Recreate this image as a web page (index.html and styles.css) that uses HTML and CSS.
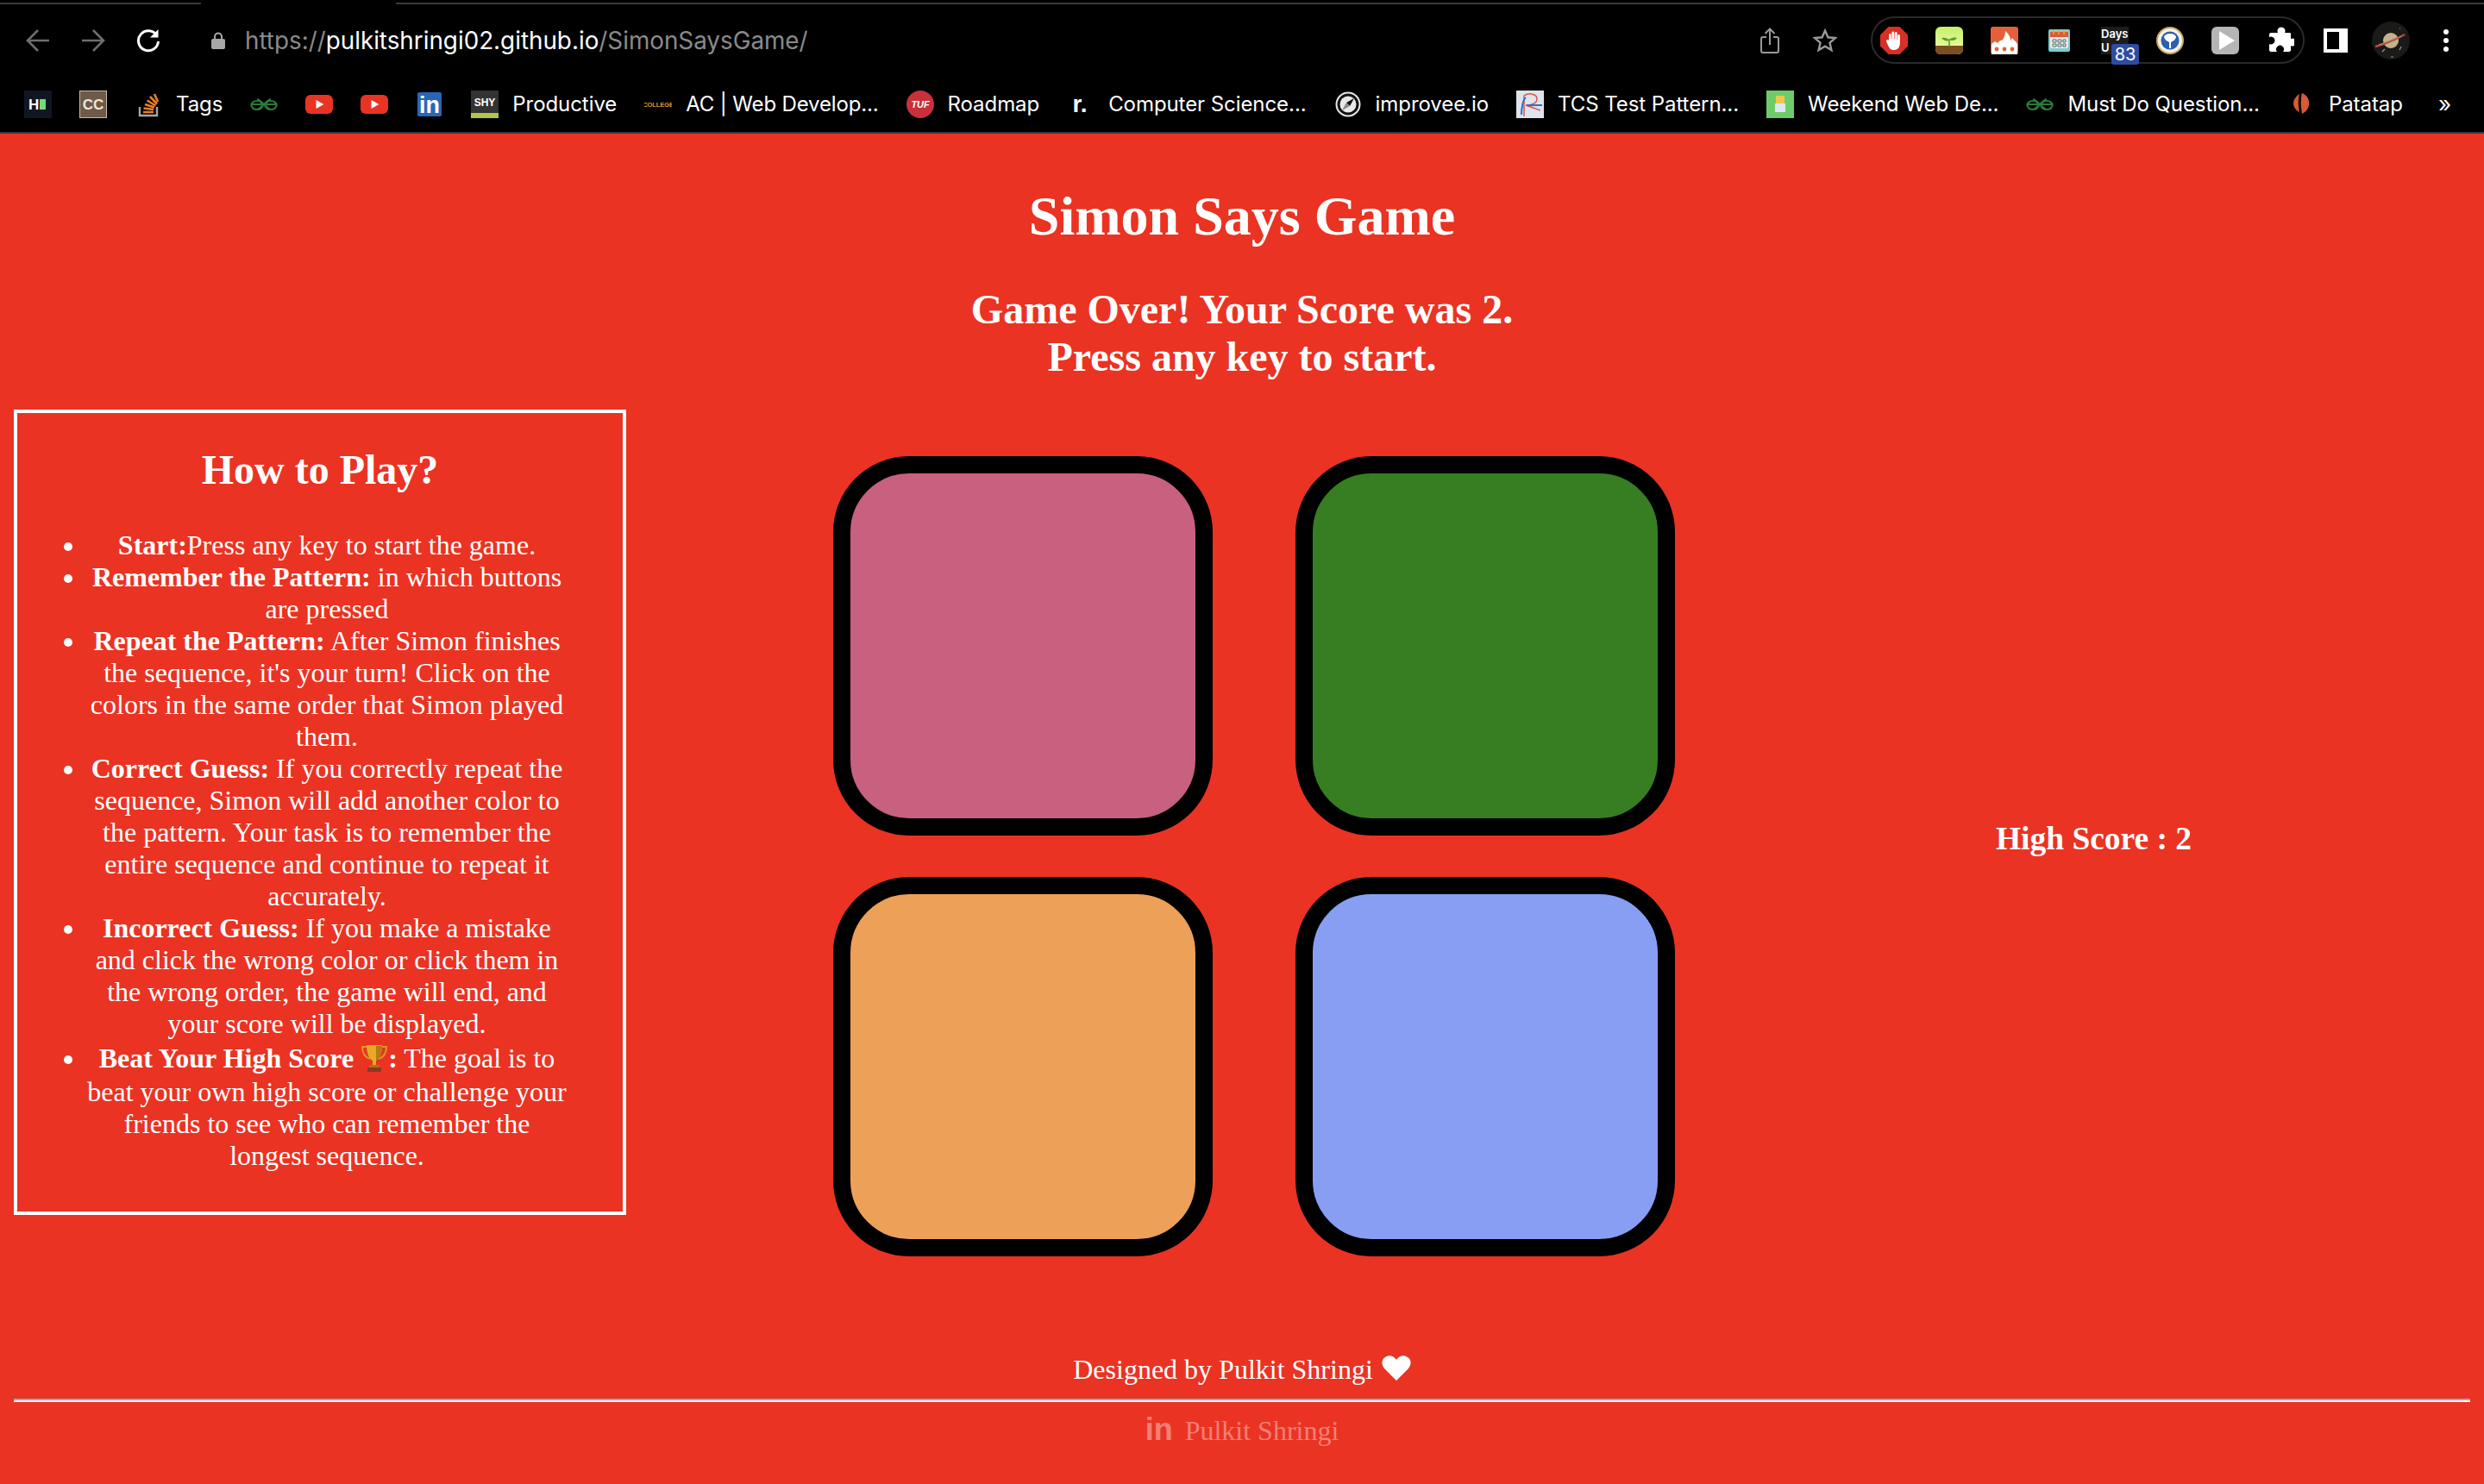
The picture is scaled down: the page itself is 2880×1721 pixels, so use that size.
FILE: index.html
```html
<!DOCTYPE html>
<html lang="en">
<head>
    <meta charset="UTF-8">
    <meta name="viewport" content="width=device-width, initial-scale=1.0">
    <title>Simon Says Game</title>
    <link rel="stylesheet" href="styles.css">
</head>
<body>
    <div class="browser">
        <div class="tab-line">
            <div class="tab-line-left"></div>
            <div class="tab-line-right"></div>
        </div>
        <div class="toolbar">
            <svg class="nav-icon" viewBox="0 0 28 28" fill="none" stroke="#6e6e6e" stroke-width="2.6"><path d="M27 14H3M14 2 2 14l12 12"/></svg>
            <svg class="nav-icon" viewBox="0 0 28 28" fill="none" stroke="#6e6e6e" stroke-width="2.6"><path d="M1 14h24M14 2l12 12-12 12"/></svg>
            <svg class="nav-icon" viewBox="0 0 28 28" fill="none" stroke="#fff" stroke-width="3"><path d="M24 8.500A11.500 11.500 0 1 0 25.500 15"/><path d="M25.500 1v9.500H16" fill="#fff" stroke="none"/></svg>
            <svg class="lock" viewBox="0 0 16 20"><path d="M4 9V5.500a4 4 0 0 1 8 0V9" fill="none" stroke="#a8a8a8" stroke-width="2"/><rect y="8" width="16" height="12" rx="2" fill="#a8a8a8"/></svg>
            <div class="url">https://<span class="url-host">pulkitshringi02.github.io</span>/SimonSaysGame/</div>
            <div class="toolbar-right">
                <svg class="share" viewBox="0 0 22 30" fill="none" stroke="#9a9a9a" stroke-width="2"><path d="M7 11H3a2 2 0 0 0-2 2v14a2 2 0 0 0 2 2h16a2 2 0 0 0 2-2V13a2 2 0 0 0-2-2h-4M11 20V2M5.500 7 11 1.500 16.500 7"/></svg>
                <svg class="star" viewBox="0 0 28 28" fill="none" stroke="#9a9a9a" stroke-width="2.400"><path d="M14 2.500l3.400 7.800 8.400.8-6.300 5.600 1.900 8.300-7.400-4.400-7.400 4.400 1.900-8.300-6.300-5.600 8.400-.8z"/></svg>
                <div class="ext-pill">
                    <svg class="fav" viewBox="0 0 32 32"><path d="M9.500 0h13L32 9.500v13L22.500 32h-13L0 22.500v-13z" fill="#d92f26"/><path d="M10 15V9.500a1.400 1.400 0 0 1 2.800 0V14h.6V6.800a1.400 1.400 0 0 1 2.800 0V14h.6V7.500a1.400 1.400 0 0 1 2.800 0V15h.5v-4.500a1.400 1.400 0 0 1 2.800 0V19c0 5-3 8-7 8-3.500 0-5-1.500-6.500-4.500L7 17a1.400 1.400 0 0 1 2.400-1.400z" fill="#fff"/></svg>
                    <svg class="fav" viewBox="0 0 32 32"><defs><linearGradient id="forest-sky" x1="0" y1="0" x2="0" y2="1"><stop offset="0" stop-color="#c5f06a"/><stop offset="1" stop-color="#f0fcae"/></linearGradient></defs><rect width="32" height="32" rx="6" fill="url(#forest-sky)"/><path d="M0 22h32v4a6 6 0 0 1-6 6H6a6 6 0 0 1-6-6z" fill="#7c4f21"/><path d="M16 23v-9" stroke="#5d9a2c" stroke-width="1.600"/><path d="M16 16c-2-3-5-4-9-3 2 3 6 4 9 3zM16 15c2-2 5-3 9-2-2 3-6 4-9 2z" fill="#5d9a2c"/></svg>
                    <svg class="fav" viewBox="0 0 32 32"><rect width="32" height="32" rx="3" fill="#e5603a"/><path d="M1 32V20l4-3 3 2c2-3 4-3 6-4 2-3 3-6 3-10 4 3 6 7 6 11l2-3c2 3 6 5 6 8v11z" fill="#fff"/><circle cx="7" cy="26" r="2.400" fill="#e5603a"/><circle cx="16" cy="26" r="2.400" fill="#e5603a"/><circle cx="25" cy="26" r="2.400" fill="#e5603a"/></svg>
                    <svg class="fav" viewBox="0 0 32 32"><rect x="3" y="3" width="25" height="26" rx="2" fill="#7ccdd0"/><rect x="5" y="6" width="21" height="19" rx="2" fill="#e4ecec"/><rect x="5" y="6" width="21" height="6" fill="#e2573a"/><path d="M9 4v5M15 4v5M21 4v5" stroke="#e0a92e" stroke-width="1.600"/><path d="M8 15h4v3H8zM14 15h4v3h-4zM20 15h3v3h-3zM8 20h4v3H8zM14 20h4v3h-4zM20 20h3v3h-3z" fill="none" stroke="#5a6a6a"/></svg>
                    <div class="days-ext">
                        <div class="days-text">Days<br>U</div>
                        <div class="days-badge">83</div>
                    </div>
                    <svg class="fav" viewBox="0 0 32 32"><circle cx="16" cy="16" r="15" fill="#f2f2e8" stroke="#c9a860" stroke-width="2"/><circle cx="16" cy="16" r="10.500" fill="#2a5fae"/><path d="M15 25v-7l-5-3 1-1 4 2v-5h2v5l4-2 1 1-5 3v7z" fill="#fff"/><ellipse cx="16" cy="12" rx="7" ry="4" fill="#fff"/></svg>
                    <svg class="fav" viewBox="0 0 32 32"><rect width="32" height="32" rx="6" fill="#b5b5b5"/><path d="M9 5l18 11L9 27z" fill="#fff"/></svg>
                    <svg class="fav" viewBox="0 0 32 32"><path d="M13 7a4.500 4.500 0 1 1 8 0h6a1 1 0 0 1 1 1v6a4.500 4.500 0 1 1 0 8v5a2 2 0 0 1-2 2h-7a4.500 4.500 0 1 0-7 0H5a2 2 0 0 1-2-2v-7a4.500 4.500 0 1 0 0-8V9a2 2 0 0 1 2-2z" fill="#fff"/></svg>
                </div>
                <div class="side-panel"></div>
                <svg class="avatar" viewBox="0 0 44 44"><circle cx="22" cy="22" r="22" fill="#1a1a18"/><circle cx="22" cy="22" r="9" fill="#c8b08c"/><path d="M4 29C12 27 30 20 38 15" stroke="#c9403c" stroke-width="2.400" fill="none"/><path d="M8 27C16 24 28 20 34 17" stroke="#7fae78" stroke-width="1"/><path d="M12 35l3-3M32 33l2-4M22 41h3M32 8h1" stroke="#999" stroke-width="1.200"/></svg>
                <div class="dots"><i></i><i></i><i></i></div>
            </div>
        </div>
        <div class="bookmarks">
            <div class="bm">
                <svg class="fav" viewBox="0 0 32 32"><rect width="32" height="32" fill="#111722"/><text x="5" y="22" class="fav-text" font-size="17" fill="#fff">H</text><rect x="18" y="10" width="7" height="12" fill="#6fdc7e"/></svg>
            </div>
            <div class="bm">
                <svg class="fav" viewBox="0 0 32 32"><rect width="32" height="32" fill="#c4b9aa"/><rect x="1" y="1" width="30" height="30" fill="#6f5a47"/><text x="16" y="22" text-anchor="middle" class="fav-text" font-size="17" fill="#eee6da">CC</text></svg>
            </div>
            <div class="bm">
                <svg class="fav" viewBox="0 0 32 32"><path d="M6 19v10h20V19" fill="none" stroke="#a5a5a5" stroke-width="2.400"/><path d="M10 25h12M10.500 20.500l11.500 1.500M12 16l11 3.500M14.500 11.500l10 6M18 7l8 8.500M23 4l4 9" stroke="#e87e28" stroke-width="2.600"/></svg>
                <span>Tags</span>
            </div>
            <div class="bm">
                <svg class="fav" viewBox="0 0 32 32" fill="none" stroke="#2a7a3c" stroke-width="2.200"><ellipse cx="8" cy="17" rx="6.500" ry="5"/><ellipse cx="24" cy="17" rx="6.500" ry="5"/><path d="M2 16h28M8 10c4 0 12 12 16 12M24 10c-4 0-12 12-16 12"/></svg>
            </div>
            <div class="bm">
                <svg class="fav" viewBox="0 0 32 32"><rect y="5" width="32" height="22" rx="6" fill="#e93323"/><path d="M12.500 11l9 5-9 5z" fill="#fff"/></svg>
            </div>
            <div class="bm">
                <svg class="fav" viewBox="0 0 32 32"><rect y="5" width="32" height="22" rx="6" fill="#e93323"/><path d="M12.500 11l9 5-9 5z" fill="#fff"/></svg>
            </div>
            <div class="bm">
                <svg class="fav" viewBox="0 0 32 32"><rect x="2" y="2" width="28" height="28" rx="2" fill="#2867b8"/><text x="16" y="26" text-anchor="middle" class="fav-text" font-size="27" fill="#fff">in</text></svg>
            </div>
            <div class="bm">
                <svg class="fav" viewBox="0 0 32 32"><rect width="32" height="32" fill="#333"/><rect y="26" width="32" height="6" fill="#b3c640"/><text x="16" y="18" text-anchor="middle" class="fav-text" font-size="12" fill="#fff">SHY</text></svg>
                <span>Productive</span>
            </div>
            <div class="bm">
                <svg class="fav" viewBox="0 0 32 32"><text x="16" y="19" text-anchor="middle" class="fav-text" font-size="7.500" fill="#e0982a">COLLEGE</text></svg>
                <span class="bm-tight">AC | Web Develop...</span>
            </div>
            <div class="bm">
                <svg class="fav" viewBox="0 0 32 32"><circle cx="16" cy="16" r="16" fill="#c8303c"/><text x="16" y="20" text-anchor="middle" class="fav-text" font-size="11" font-style="italic" fill="#fff">TUF</text></svg>
                <span>Roadmap</span>
            </div>
            <div class="bm">
                <svg class="fav" viewBox="0 0 32 32"><text x="15" y="25" text-anchor="middle" class="fav-text" font-size="28" fill="#fff">r.</text></svg>
                <span>Computer Science...</span>
            </div>
            <div class="bm">
                <svg class="fav" viewBox="0 0 32 32"><circle cx="16" cy="16" r="13.500" fill="#111" stroke="#e8e8e8" stroke-width="2"/><circle cx="16" cy="16" r="9.500" fill="#e8e8e8"/><path d="M23 9l-5 9-4-4z" fill="#111"/><path d="M9 23l5-9 4 4z" fill="#888"/></svg>
                <span>improvee.io</span>
            </div>
            <div class="bm">
                <svg class="fav" viewBox="0 0 32 32"><rect width="32" height="32" fill="#dfe3ea"/><path d="M9 30V6c6-4 15-2 15 4 0 5-7 7-13 7l17 6" fill="none" stroke="#d8584e" stroke-width="1.500"/><path d="M6 28c0-8 2-18 5-20M12 17h18" fill="none" stroke="#2e6fd0" stroke-width="2"/></svg>
                <span>TCS Test Pattern...</span>
            </div>
            <div class="bm">
                <svg class="fav" viewBox="0 0 32 32"><rect width="32" height="32" fill="#6ecb6a"/><rect x="11" y="6" width="10" height="9" fill="#f0c850"/><rect x="10" y="15" width="12" height="10" fill="#dfe8f0"/></svg>
                <span>Weekend Web De...</span>
            </div>
            <div class="bm">
                <svg class="fav" viewBox="0 0 32 32" fill="none" stroke="#2a7a3c" stroke-width="2.200"><ellipse cx="8" cy="17" rx="6.500" ry="5"/><ellipse cx="24" cy="17" rx="6.500" ry="5"/><path d="M2 16h28M8 10c4 0 12 12 16 12M24 10c-4 0-12 12-16 12"/></svg>
                <span>Must Do Question...</span>
            </div>
            <div class="bm">
                <svg class="fav" viewBox="0 0 32 32"><path d="M17 3c6 2 9 8 8 14-1 5-4 8-8 10-1-7-2-12-1-16 0-3 0-6 1-8z" fill="#d65a34"/><path d="M14 4c-3 2-7 6-7 11 0 4 3 8 7 10-1-6-2-14 0-21z" fill="#d65a34"/></svg>
                <span>Patatap</span>
            </div>
            <div class="bm-more">»</div>
        </div>
    </div>

    <div class="page">
        <h1>Simon Says Game</h1>
        <h2 class="status">Game Over! Your Score was 2.<br>Press any key to start.</h2>

        <div class="game-row">
            <div class="how-to">
                <h2>How to Play?</h2>
                <ul>
                    <li><b>Start:</b>Press any key to start the game.</li>
                    <li><b>Remember the Pattern:</b> in which buttons are pressed</li>
                    <li><b>Repeat the Pattern:</b> After Simon finishes the sequence, it's your turn! Click on the colors in the same order that Simon played them.</li>
                    <li><b>Correct Guess:</b> If you correctly repeat the sequence, Simon will add another color to the pattern. Your task is to remember the entire sequence and continue to repeat it accurately.</li>
                    <li><b>Incorrect Guess:</b> If you make a mistake and click the wrong color or click them in the wrong order, the game will end, and your score will be displayed.</li>
                    <li><b>Beat Your High Score <svg class="trophy" viewBox="0 0 32 32"><path d="M8 3H2c0 8 3 12 9 14M24 3h6c0 8-3 12-9 14" fill="none" stroke="#d79a1e" stroke-width="2"/><path d="M7 1h18c0 10-3 16-7 18v5h-4v-5C10 17 7 11 7 1z" fill="#e6ab24"/><path d="M18 2h7c0 9-3 15-7 17z" fill="#b87a12"/><rect x="10" y="24" width="12" height="3" fill="#a8741a"/><rect x="8" y="27" width="16" height="5" fill="#8a3a20"/></svg>:</b> The goal is to beat your own high score or challenge your friends to see who can remember the longest sequence.</li>
                </ul>
            </div>

            <div class="board">
                <div class="btn pink"></div>
                <div class="btn green"></div>
                <div class="btn orange"></div>
                <div class="btn blue"></div>
            </div>

            <h3 class="high-score">High Score : 2</h3>
        </div>

        <div class="footer-text">Designed by Pulkit Shringi <svg class="heart" viewBox="0 0 34 30"><path d="M17 29 3 15C-1 10 0 4 4 2c4-3 10-2 13 3 3-5 9-6 13-3 4 2 5 8 1 13z" fill="#fff"/></svg></div>
        <hr class="rule">
        <div class="profile"><span class="in-logo">in</span>Pulkit Shringi</div>
    </div>
</body>
</html>
```

FILE: styles.css
```css
body {
    margin: 0;
    background-color: #ea3323;
    color: white;
    font-family: "Liberation Serif", "Times New Roman", serif;
    font-size: 32px;
}

/* browser chrome */
.browser {
    background-color: #000;
    font-family: Inter, "Liberation Sans", sans-serif;
    border-bottom: 2px solid #3a3a3a;
}
.tab-line {
    display: flex;
    height: 5px;
}
.tab-line-left, .tab-line-right {
    height: 2px;
    margin-top: 3px;
    background-color: #3c3c3c;
}
.tab-line-left {
    width: 233px;
}
.tab-line-right {
    flex: 1;
    margin-left: 226px;
}
.toolbar {
    display: flex;
    align-items: center;
    height: 83px;
    padding-left: 30px;
    padding-right: 38px;
}
.nav-icon {
    width: 28px;
    height: 28px;
    margin-right: 36px;
}
.lock {
    width: 16px;
    height: 20px;
    margin-left: 23px;
    margin-right: 23px;
}
.url {
    font-size: 27.8px;
    color: #8a8a8a;
}
.url-host {
    color: #fff;
}
.toolbar-right {
    display: flex;
    align-items: center;
    margin-left: auto;
}
.share {
    width: 22px;
    height: 30px;
    margin-right: 39px;
}
.star {
    width: 28px;
    height: 28px;
    margin-right: 39px;
}
.ext-pill {
    display: flex;
    align-items: center;
    gap: 32px;
    box-sizing: border-box;
    width: 503px;
    height: 55px;
    padding-left: 9px;
    border: 2px solid #2a2a2a;
    border-radius: 28px;
    margin-right: 22px;
}
.fav {
    display: block;
    flex: none;
    width: 32px;
    height: 32px;
}
.fav-text {
    font-family: "Liberation Sans", sans-serif;
    font-weight: bold;
}
.days-ext {
    position: relative;
    width: 32px;
    height: 32px;
    background-color: #1c1c1c;
}
.days-text {
    font-size: 13px;
    font-weight: 600;
    line-height: 16px;
    color: #fff;
}
.days-badge {
    position: absolute;
    left: 12px;
    top: 20px;
    width: 32px;
    height: 24px;
    border-radius: 3px;
    background-color: #2f4ca0;
    color: #fff;
    font-size: 20px;
    line-height: 24px;
    text-align: center;
}
.side-panel {
    box-sizing: border-box;
    width: 28px;
    height: 28px;
    border: 4px solid #fff;
    border-right-width: 10px;
    margin-right: 28px;
}
.avatar {
    width: 44px;
    height: 44px;
    margin-right: 36px;
}
.dots {
    display: flex;
    flex-direction: column;
    gap: 4px;
    width: 12px;
    align-items: center;
}
.dots i {
    width: 6px;
    height: 6px;
    border-radius: 50%;
    background-color: #fff;
}
.bookmarks {
    display: flex;
    align-items: center;
    height: 65px;
    padding-left: 12px;
    color: #fff;
    font-size: 24px;
    letter-spacing: -0.07px;
}
.bm {
    display: flex;
    align-items: center;
    gap: 16px;
    padding: 0 16px;
    white-space: nowrap;
}
.bm-tight {
    letter-spacing: -0.15px;
}
.bm-more {
    margin-left: auto;
    margin-right: 38px;
    font-size: 26px;
}

/* page */
.page {
    padding: 16px;
}
h1 {
    margin: 43px 0;
    font-size: 64px;
    text-align: center;
}
h2 {
    margin: 40px 0;
    font-size: 48px;
    text-align: center;
}
.status {
    margin-bottom: 34px;
}
.game-row {
    display: flex;
}
.how-to {
    box-sizing: border-box;
    flex: none;
    width: 710px;
    height: 934px;
    border: 4px solid #fff;
}
.how-to h2 {
    margin-top: 38px;
    margin-bottom: 42px;
}
.how-to ul {
    margin: 0;
    padding: 0 64px 0 80px;
    text-align: center;
}
.trophy {
    width: 32px;
    height: 32px;
    margin: 5px 0;
    vertical-align: -10px;
}
.board {
    display: grid;
    grid-template-columns: 440px 440px;
    grid-auto-rows: 440px;
    column-gap: 96px;
    row-gap: 48px;
    margin: 54px 0 0 240px;
}
.btn {
    box-sizing: border-box;
    border: 20px solid #000;
    border-radius: 20%;
}
.pink { background-color: #c86080; }
.green { background-color: #377d22; }
.orange { background-color: #eda058; }
.blue { background-color: #889ef3; }
.high-score {
    align-self: center;
    margin: 12px 0 0 372px;
    font-size: 37.44px;
}
.footer-text {
    margin-top: 113px;
    text-align: center;
}
.heart {
    width: 34px;
    height: 30px;
    margin-left: 2px;
    vertical-align: -3px;
}
.rule {
    height: 0;
    margin: 15px 0 11px;
    border: 0;
    border-top: 2px solid #a8a8a8;
    border-bottom: 2px solid #fff;
}
.profile {
    text-align: center;
    color: rgba(255, 255, 255, 0.4);
}
.in-logo {
    margin-right: 14px;
    font-family: "Liberation Sans", sans-serif;
    font-size: 36px;
    font-weight: bold;
}
```
